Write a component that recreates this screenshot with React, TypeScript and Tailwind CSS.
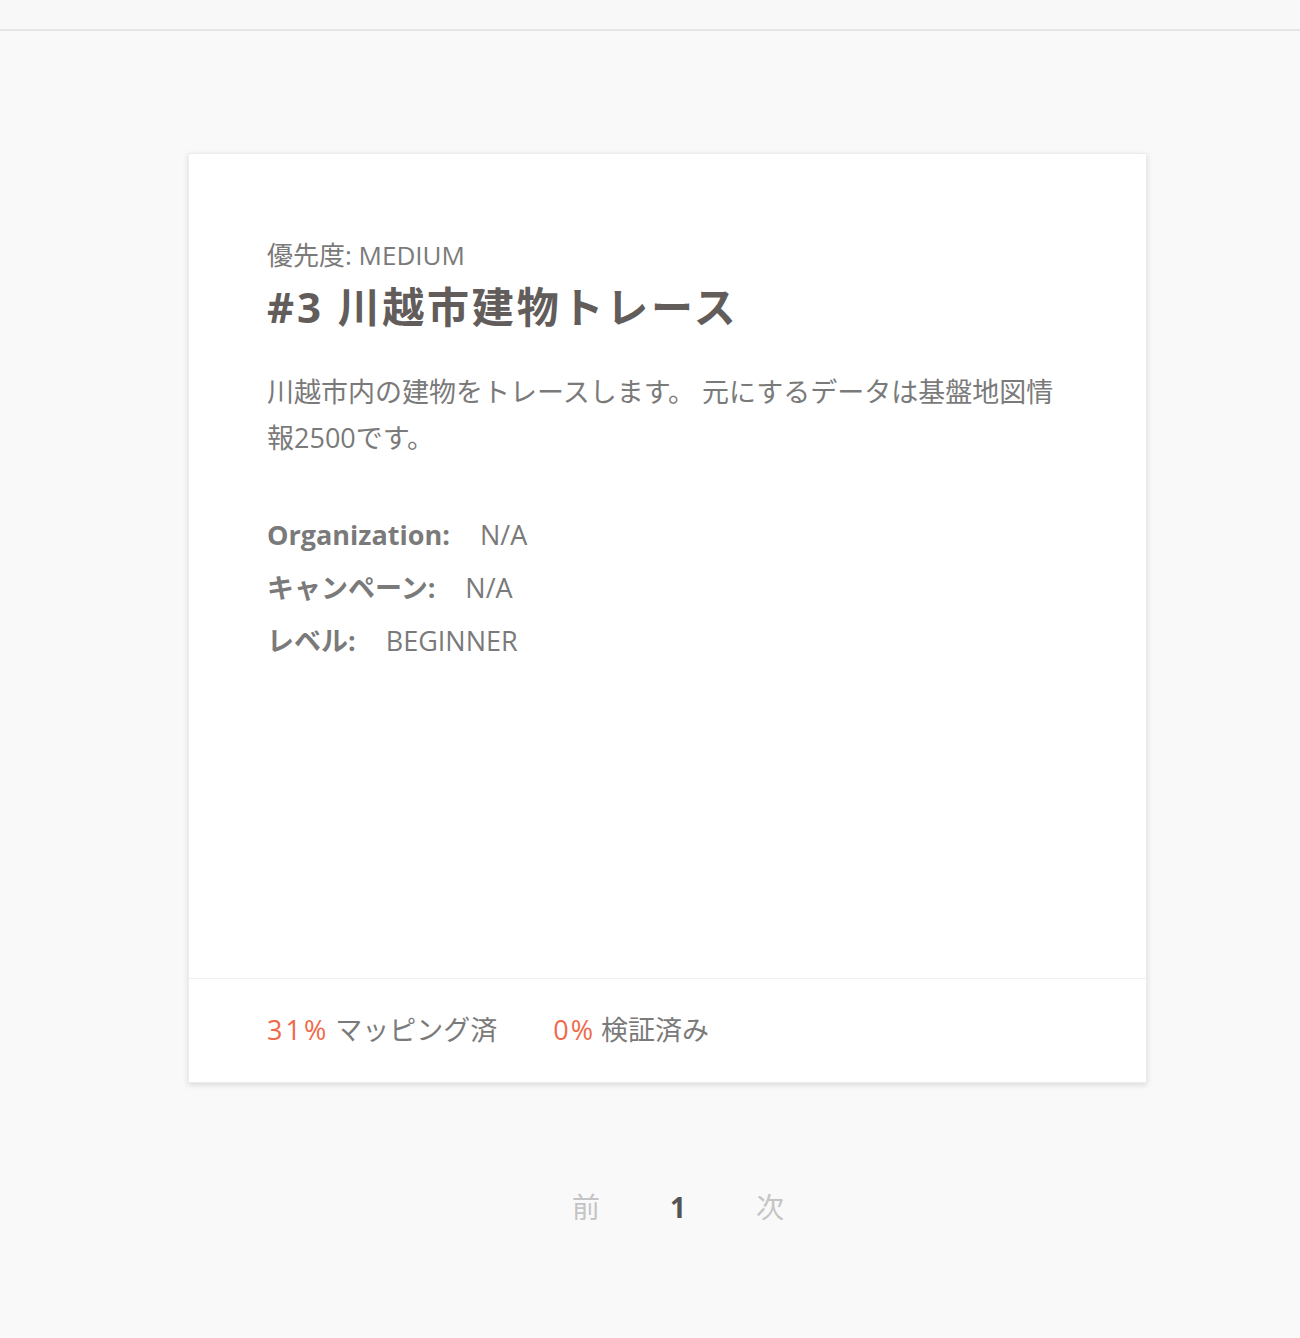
import React from "react";

const font = "font-['Open_Sans','Noto_Sans_CJK_JP',sans-serif]";

export default function App() {
  return (
    <div className={`min-h-[1338px] w-full bg-[#f9f9f9] ${font}`}>
      <div className="h-[31px] border-b-2 border-[#e6e6e6] bg-[#f8f8f8]" />
      <div className="ml-[188px] mt-[122px] w-[959px]">
        <div className="bg-white border border-[#ececec] shadow-[0_2px_6px_rgba(0,0,0,0.13)]">
          <div className="h-[824px] px-[78px] pt-[83px]">
            <div className="text-[26px] leading-[36px] text-[#7a7a7a]">優先度: MEDIUM</div>
            <h1 className="mt-[8px] text-[42px] leading-[52px] font-bold tracking-[2.8px] text-[#625d5b]">
              #3 川越市建物トレース
            </h1>
            <p className="mt-[36px] text-[27px] leading-[46px] text-[#7a7a7a]">
              川越市内の建物をトレースします。 元にするデータは基盤地図情報2500です。
            </p>
            <div className="mt-[47px] text-[27px] leading-[53px] text-[#7a7a7a]">
              <div>
                <span className="font-bold">Organization:</span>
                <span className="ml-[30px]">N/A</span>
              </div>
              <div>
                <span className="font-bold">キャンペーン:</span>
                <span className="ml-[30px]">N/A</span>
              </div>
              <div>
                <span className="font-bold">レベル:</span>
                <span className="ml-[30px]">BEGINNER</span>
              </div>
            </div>
          </div>
          <div className="flex h-[104px] items-center border-t border-[#f0f0f0] px-[78px] text-[27px] text-[#7a7a7a]">
            <span className="tracking-[3px] text-[#f06a4a]">31%</span>
            <span className="ml-[6px]">マッピング済</span>
            <span className="ml-[56px] tracking-[2px] text-[#f06a4a]">0%</span>
            <span className="ml-[6px]">検証済み</span>
          </div>
        </div>
        <div className="mt-[104px] flex justify-center pl-[21px] text-[28px] leading-[40px]">
          <span className="w-[62px] text-center text-[#c4c4c4]">前</span>
          <span className="mx-[30px] w-[62px] text-center font-bold text-[#555]">1</span>
          <span className="w-[62px] text-center text-[#c4c4c4]">次</span>
        </div>
      </div>
    </div>
  );
}
